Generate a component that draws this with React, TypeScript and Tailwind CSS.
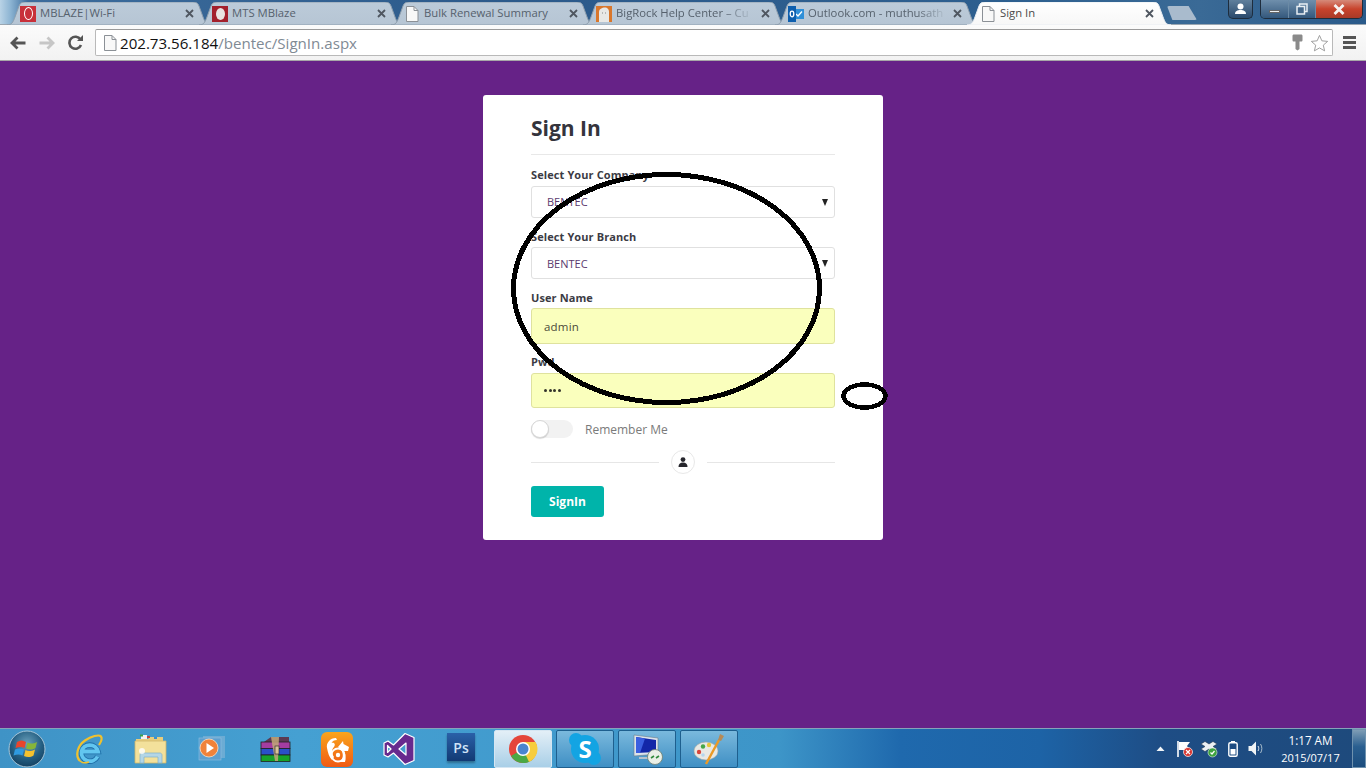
import React from "react";

const UI = "font-['Open_Sans',sans-serif]";

function TabShape({ active }: { active?: boolean }) {
  const id = active ? "tabA" : "tabI";
  return (
    <svg className="absolute inset-0" width="204" height="23" viewBox="0 0 204 23" fill="none">
      <defs>
        <linearGradient id={id} x1="0" y1="0" x2="0" y2="1">
          <stop offset="0" stopColor={active ? "#ffffff" : "#bccbd9"} />
          <stop offset="1" stopColor={active ? "#f7f7f7" : "#b6c5d4"} />
        </linearGradient>
      </defs>
      <path
        d="M0 23 C5 23 6 20 8 15 L12 4 C13 1 15 0 18 0 L186 0 C189 0 191 1 192 4 L196 15 C198 20 199 23 204 23 Z"
        fill={`url(#${id})`}
        stroke={active ? "#e8edf2" : "#8f9fae"}
        strokeWidth="1"
      />
    </svg>
  );
}

function Page() {
  return (
    <svg width="16" height="18" viewBox="0 0 16 18" fill="none">
      <path d="M2.500 1.500H10L14 5.500V16.500H2.500Z" fill="#f8f8f8" stroke="#8b9096" />
      <path d="M10 1.500V5.500H14" stroke="#8b9096" />
    </svg>
  );
}

function Tab({
  title,
  icon,
  active,
  fade,
}: {
  title: string;
  icon: React.ReactNode;
  active?: boolean;
  fade?: boolean;
}) {
  return (
    <div className={`relative w-[204px] h-[23px] shrink-0 -mr-[12px] ${active ? "z-10" : ""}`}>
      <TabShape active={active} />
      <div className="absolute inset-0 flex items-center pl-[13px]">
        <div className="w-[16px] h-[17px] flex items-center justify-center shrink-0">{icon}</div>
        <div
          className={`ml-[4px] -mt-[1px] whitespace-nowrap text-[11.300px] leading-[16px] ${UI} ${active ? "text-[#4a4a4a]" : "text-[#56616d]"}`}
          style={
            fade
              ? { WebkitMaskImage: "linear-gradient(to right,#000 80%,rgba(0,0,0,0.15))" }
              : undefined
          }
        >
          {title}
        </div>
      </div>
      <svg className="absolute left-[178px] top-[7px]" width="9" height="9" viewBox="0 0 9 9">
        <path d="M1 1L8 8M8 1L1 8" stroke="#4f5660" strokeWidth="1.800" />
      </svg>
    </div>
  );
}

function TabBar() {
  return (
    <div className="relative h-[25px] bg-[linear-gradient(90deg,#b9d3e6_0px,#8fb6d4_10px,#3c6c9c_28px,#2c5a8b_500px,#2d5f8f_1000px,#3a6a96_1200px,#2a5a8a_1366px)] border-b border-[#9aa6b1]">
      <div className="flex pt-[2px] pl-[7px]">
        <Tab
          title="MBLAZE|Wi-Fi"
          icon={
            <div className="w-[16px] h-[16px] bg-[#c8303a] flex items-center justify-center">
              <div className="w-[9px] h-[13px] rounded-[50%] border-[1.500px] border-white" />
            </div>
          }
        />
        <Tab
          title="MTS MBlaze"
          icon={
            <div className="w-[16px] h-[16px] bg-[#a3202c] flex items-center justify-center">
              <div className="w-[9px] h-[12px] rounded-[50%] bg-[#e9e4e2]" />
            </div>
          }
        />
        <Tab title="Bulk Renewal Summary" icon={<Page />} />
        <Tab
          title="BigRock Help Center – Cu"
          fade
          icon={
            <svg width="16" height="16" viewBox="0 0 16 16">
              <rect width="16" height="16" fill="#d9772c" />
              <path d="M3 16V6C3 3 6 1.500 9 1.500C12 1.500 13 4 13 6V16Z" fill="#e8e8e6" />
              <path d="M6 7h1M9 7h1" stroke="#888" />
            </svg>
          }
        />
        <Tab
          title="Outlook.com - muthusath"
          fade
          icon={
            <svg width="16" height="16" viewBox="0 0 16 16">
              <rect x="6" y="3" width="10" height="10" fill="#2f8fd8" />
              <path d="M8 8L10 10L14 5.500" stroke="#fff" strokeWidth="1.300" fill="none" />
              <rect y="0" width="8" height="16" fill="#0e5fae" />
              <ellipse cx="4" cy="8" rx="1.800" ry="2.800" fill="none" stroke="#fff" strokeWidth="1.300" />
            </svg>
          }
        />
        <Tab title="Sign In" active icon={<Page />} />
        <div className="ml-[8px] mt-[4px] w-[30px] h-[14px] bg-[#a9bbcd] [clip-path:polygon(0_0,72%_0,100%_100%,18%_100%)] rounded-[2px]" />
      </div>

      <div className="absolute top-0 right-[3px] flex">
        <div className="w-[25px] h-[19px] mr-[7px] rounded-b-[5px] border border-t-0 border-[#1e2d3d] bg-[linear-gradient(#5f7f9c,#2a4a6c)] flex items-center justify-center">
          <svg width="13" height="12" viewBox="0 0 13 12">
            <circle cx="6.500" cy="3.500" r="3" fill="#fff" />
            <path d="M1 11C1 8 3.500 7 6.500 7C9.500 7 12 8 12 11Z" fill="#fff" />
          </svg>
        </div>
        <div className="flex h-[19px] rounded-b-[5px] border border-t-0 border-[#1e2d3d] overflow-hidden">
          <div className="w-[28px] border-r border-[#6b8aa5] bg-[linear-gradient(#6f8fac,#34587c)] flex items-center justify-center">
            <div className="w-[11px] h-[3px] mt-[4px] bg-[#eef2f5] border-[0.5px] border-[#666]" />
          </div>
          <div className="w-[27px] border-r border-[#6b8aa5] bg-[linear-gradient(#6f8fac,#34587c)] flex items-center justify-center">
            <svg width="12" height="12" viewBox="0 0 12 12" fill="none">
              <rect x="3.500" y="1" width="7.500" height="7.500" stroke="#e8eef3" strokeWidth="1.500" />
              <rect x="1" y="3.500" width="7.500" height="7.500" fill="#47698b" stroke="#e8eef3" strokeWidth="1.500" />
            </svg>
          </div>
          <div className="w-[46px] bg-[linear-gradient(#d58a7a,#c8432c_50%,#a93a28)] flex items-center justify-center">
            <svg width="12" height="11" viewBox="0 0 12 11">
              <path d="M1.500 1L10.500 10M10.500 1L1.500 10" stroke="#f5f2f0" strokeWidth="2.800" />
            </svg>
          </div>
        </div>
      </div>
    </div>
  );
}

function Toolbar() {
  return (
    <div className="h-[36px] bg-[linear-gradient(#fbfbfb,#f2f2f2)] border-b border-[#a8a8a8] flex items-center pl-[10px]">
      <svg width="16" height="14" viewBox="0 0 16 14" fill="none">
        <path d="M7.500 1.500L2 7L7.500 12.500M2.500 7H15.500" stroke="#555" strokeWidth="2.800" />
      </svg>
      <svg className="ml-[13px]" width="16" height="14" viewBox="0 0 16 14" fill="none">
        <path d="M8.500 1.500L14 7L8.500 12.500M13.500 7H0.500" stroke="#c6c6c6" strokeWidth="2.800" />
      </svg>
      <svg className="ml-[13px]" width="16" height="16" viewBox="0 0 16 16" fill="none">
        <path d="M13 10A6 6 0 1 1 12.500 4.500" stroke="#555" strokeWidth="2.600" />
        <path d="M9 6H15V0Z" fill="#555" />
      </svg>
      <div className="ml-[11px] w-[1238px] h-[27px] bg-white rounded-[2px] border border-[#b9b9b9] border-t-[#9a9a9a] flex items-center pl-[6px]">
        <Page />
        <div className={`ml-[2px] text-[15.100px] leading-[20px] whitespace-nowrap ${UI}`}>
          <span className="text-[#111]">202.73.56.184</span>
          <span className="text-[#7f8a94]">/bentec/SignIn.aspx</span>
        </div>
        <div className="ml-auto mr-[3px] flex items-center gap-[7px]">
          <svg width="11" height="17" viewBox="0 0 11 17">
            <path d="M2 0.500H9C10 0.500 10.500 1 10.500 2V6C10.500 7 10 7.500 9 7.500H7.500V15L5.500 16.500L3.500 15V7.500H2C1 7.500 0.500 7 0.500 6V2C0.500 1 1 0.500 2 0.500Z" fill="#8a8a8a" />
          </svg>
          <svg width="19" height="18" viewBox="0 0 20 19" fill="#fff" stroke="#9a9a9a">
            <path d="M10 1.500L12.500 7.200L18.600 7.800L14 11.800L15.400 17.800L10 14.700L4.600 17.800L6 11.800L1.400 7.800L7.500 7.200Z" />
          </svg>
        </div>
      </div>
      <div className="ml-[10px] flex flex-col gap-[2px]">
        <div className="w-[13px] h-[3px] bg-[#555]" />
        <div className="w-[13px] h-[3px] bg-[#555]" />
        <div className="w-[13px] h-[3px] bg-[#555]" />
      </div>
    </div>
  );
}

function Label({ children, className = "" }: { children: React.ReactNode; className?: string }) {
  return (
    <div className={`text-[11px] leading-[14px] font-bold tracking-[0.1px] text-[#3b3b44] ${className}`}>
      {children}
    </div>
  );
}

function SelectBox({ mt, pt }: { mt: string; pt: string }) {
  return (
    <div className={`relative h-[32px] ${mt} bg-white rounded-[3px] border border-[#e0e0e0] flex items-center pl-[15px]`}>
      <span className={`text-[11px] text-[#5b3a6e] ${pt}`}>BENTEC</span>
      <div className="absolute right-[6px] top-[12px] w-0 h-0 border-l-[3.500px] border-r-[3.500px] border-t-[7px] border-l-transparent border-r-transparent border-t-[#222]" />
    </div>
  );
}

function Card() {
  return (
    <div className={`w-[400px] h-[445px] mt-[34px] bg-white rounded-[3px] px-[48px] ${UI}`}>
      <div className="pt-[18px] h-[60px] border-b border-[#e8e8e8] text-[21px] leading-[30px] font-bold text-[#34343c]">
        Sign In
      </div>
      <Label className="mt-[13px]">Select Your Company</Label>
      <SelectBox mt="mt-[4px]" pt="pt-[1px]" />
      <Label className="mt-[12px]">Select Your Branch</Label>
      <SelectBox mt="mt-[3px]" pt="pt-[3px]" />
      <Label className="mt-[12px]">User Name</Label>
      <div className="mt-[3px] h-[36px] pt-[1px] bg-[#faffbd] rounded-[3px] border border-[#dfe29e] flex items-center pl-[12px] text-[11.500px] text-[#4a4a3a] tracking-[0.2px]">
        admin
      </div>
      <Label className="mt-[11px]">Pwd</Label>
      <div className="mt-[4px] h-[35px] bg-[#faffbd] rounded-[3px] border border-[#dfe29e] flex items-center pl-[12px]">
        <div className="flex gap-[1.500px] mt-[-1px]">
          {[0, 1, 2, 3].map((i) => (
            <div key={i} className="w-[3px] h-[3px] rounded-full bg-[#33332a]" />
          ))}
        </div>
      </div>
      <div className="mt-[12px] h-[18px] flex items-center">
        <div className="relative w-[42px] h-[18px] rounded-full bg-[#f2f2f2]">
          <div className="absolute left-0 top-0 w-[18px] h-[18px] rounded-full bg-white border border-[#d6d6d6] shadow-[0_1px_1px_rgba(0,0,0,0.15)]" />
        </div>
        <span className="ml-[12px] pt-[2px] text-[12px] text-[#7a7a7a]">Remember Me</span>
      </div>
      <div className="mt-[12px] h-[24px] flex items-center">
        <div className="w-[128px] h-px bg-[#e6e6e6]" />
        <div className="mx-[12px] w-[24px] h-[24px] rounded-full border border-[#e8e8e8] flex items-center justify-center">
          <svg width="10" height="10" viewBox="0 0 10 10" fill="#26262c">
            <circle cx="5" cy="2.600" r="2.400" />
            <path d="M0.500 10C0.500 7 2 5.500 5 5.500C8 5.500 9.500 7 9.500 10Z" />
          </svg>
        </div>
        <div className="w-[128px] h-px bg-[#e6e6e6]" />
      </div>
      <div className="mt-[12px] w-[73px] h-[31px] rounded-[3px] bg-[#00b4aa] flex items-center justify-center text-white text-[12px] font-bold">
        SignIn
      </div>
    </div>
  );
}

function TaskButton({ children, active }: { children: React.ReactNode; active?: boolean }) {
  return (
    <div className={`w-[58px] h-[38px] flex items-center justify-center shrink-0 rounded-[2px] border ${active ? "border-[#d5e6f2] bg-[linear-gradient(#e3eff7,#a9cfe7)]" : "border-[#1e5f8e] bg-[linear-gradient(#7ab9dd,#3f8fc4)]"}`}>
      {children}
    </div>
  );
}

function TaskIcon({ children }: { children: React.ReactNode }) {
  return <div className="w-[58px] h-[38px] flex items-center justify-center shrink-0">{children}</div>;
}

function Taskbar() {
  return (
    <div className="relative h-[40px] border-t border-[#86a3b8] bg-[linear-gradient(90deg,#3f93c6_0px,#45a0d2_300px,#3d95c8_780px,#1f69ad_900px,#1d63a6_1040px,#1e4d85_1160px,#1e4a7c_1366px)] flex items-center">
      <div className="w-[56px] shrink-0 flex justify-center pr-[2px]">
        <svg width="38" height="38" viewBox="0 0 38 38">
          <defs>
            <radialGradient id="orb" cx="0.500" cy="0.350" r="0.700">
              <stop offset="0" stopColor="#6aa0bc" />
              <stop offset="0.600" stopColor="#235d80" />
              <stop offset="1" stopColor="#123c5c" />
            </radialGradient>
          </defs>
          <circle cx="19" cy="19" r="18" fill="url(#orb)" stroke="#a7c6d8" />
          <path d="M9 12C12 10 15 10 18 12L16.500 18C14 16.500 11 16.500 7.500 18Z" fill="#e8452c" />
          <path d="M19.500 12.500C22 14 25 14 29 12L27.500 18C24.500 20 21 20 18 18.500Z" fill="#86b63a" />
          <path d="M7 19.500C10 18 13 18 16 19.500L14.500 25.500C12 24 9 24 5.500 25.500Z" fill="#2f9ae0" />
          <path d="M17.500 20C20 21.500 23 21.500 27 19.500L25.500 25.500C22.500 27.500 19 27.500 16 26Z" fill="#f6c22d" />
        </svg>
      </div>
      <div className="flex gap-[4px] pl-[4px]">
        <TaskIcon>
          <svg width="32" height="32" viewBox="0 0 32 32" fill="none">
            <path d="M10 18.500H25A8.500 8.500 0 0 0 8.500 18.500A8.500 8.500 0 0 0 24.500 23.500" stroke="#1f6fa8" strokeWidth="5.500" />
            <path d="M10 18.500H25A8.500 8.500 0 0 0 8.500 18.500A8.500 8.500 0 0 0 24.500 23.500" stroke="#62c6ef" strokeWidth="3.800" />
            <path d="M7 28C2 23 4 13 12 7.500C18 3.500 26 1 28 3.500C29.500 5.500 28 9 26 12" stroke="#f0c12e" strokeWidth="2.200" />
            <path d="M7 28C9 30 13 30 16 29" stroke="#f0c12e" strokeWidth="1.500" />
          </svg>
        </TaskIcon>
        <TaskIcon>
          <svg width="34" height="30" viewBox="0 0 34 30">
            <path d="M2 5H14L16 3H29V9H2Z" fill="#e8cd7c" />
            <rect x="7" y="1" width="6" height="4" fill="#f2f2f2" />
            <rect x="6" y="0.500" width="3" height="2" fill="#3da04a" />
            <rect x="13" y="2" width="3" height="2" fill="#c8403a" />
            <rect x="20" y="3" width="3" height="2" fill="#3a90d0" />
            <path d="M1 7H32V29H1Z" fill="#f3e19b" stroke="#cfb66a" strokeWidth="0.800" />
            <path d="M6 29V21C6 20 7 19 8 19H26C27 19 28 20 28 21V29H24V23H10V29Z" fill="#b4d6e6" stroke="#7fb2cc" strokeWidth="0.700" />
            <circle cx="8" cy="17" r="3" fill="#ffffff" opacity="0.800" />
          </svg>
        </TaskIcon>
        <TaskIcon>
          <svg width="30" height="28" viewBox="0 0 30 28">
            <rect x="5" y="1" width="22" height="22" fill="#7eb2d6" opacity="0.700" />
            <rect x="1" y="3" width="22" height="22" fill="#5d9fcf" stroke="#8fc0e0" strokeWidth="0.600" />
            <circle cx="11" cy="13" r="9" fill="#f0823a" stroke="#ffe0c0" strokeWidth="0.800" />
            <path d="M8.500 8L16 13L8.500 18Z" fill="#fff" />
          </svg>
        </TaskIcon>
        <TaskIcon>
          <svg width="32" height="26" viewBox="0 0 32 26">
            <path d="M2 8L12 1H30V8H2Z" fill="#5b3a52" />
            <rect x="2" y="6" width="29" height="6.500" fill="#a43da0" stroke="#222" strokeWidth="0.800" />
            <rect x="2" y="12.500" width="29" height="6.500" fill="#2a4fc8" stroke="#222" strokeWidth="0.800" />
            <rect x="2" y="19" width="29" height="6.500" fill="#17a32a" stroke="#222" strokeWidth="0.800" />
            <path d="M12 1L20 1L19 25L16 25Z" fill="#c3a878" opacity="0.850" />
            <rect x="16" y="10" width="4" height="8" fill="#d8c498" stroke="#222" strokeWidth="0.600" />
          </svg>
        </TaskIcon>
        <TaskIcon>
          <div className="w-[32px] h-[35px] mt-[2px] rounded-[6px] bg-[linear-gradient(#f9a51c,#f05a14)] flex items-center justify-center">
            <svg width="30" height="30" viewBox="0 0 30 30" fill="#fff">
              <path d="M14 3C8 3 4 8 5 13C6 18 7 22 10 25L12 22C9 17 10 14 12 12C14 9 12 7 9.500 8C10.500 6 12 5 15 5Z" />
              <circle cx="16" cy="20" r="6.500" fill="none" stroke="#fff" strokeWidth="1.800" />
              <circle cx="16" cy="20" r="2.200" />
              <path d="M16 12L21 6L21.500 9L27 12L26 16L22 16C24 20 24 24 23 27H18C21 24 22 19 19 15Z" />
            </svg>
          </div>
        </TaskIcon>
        <TaskIcon>
          <svg width="34" height="34" viewBox="0 0 34 34">
            <path
              fillRule="evenodd"
              d="M23 1.500L32 5.500V28.500L23 32.500L11.500 21L6 25L2 23V11L6 9L11.500 13ZM5.500 13.500V20.500L9 17ZM24 11L17 17L24 23Z"
              fill="#672a8e"
              stroke="#fff"
              strokeWidth="1.200"
              strokeLinejoin="round"
            />
          </svg>
        </TaskIcon>
        <TaskIcon>
          <div className="w-[28px] h-[28px] mb-[3px] bg-[linear-gradient(#2a61a8,#123a74)] flex items-center justify-center text-[14px] font-semibold text-[#cfe3f7] font-['Open_Sans',sans-serif] shadow-[0_2px_2px_rgba(0,0,0,0.3)]">
            Ps
          </div>
        </TaskIcon>
        <TaskButton active>
          <svg width="30" height="30" viewBox="0 0 30 30">
            <circle cx="15" cy="15" r="14" fill="#e4453a" />
            <path d="M15 15L3 22A14 14 0 0 0 15 29C20 29 24 27 26 23Z" fill="#4aa845" />
            <path d="M15 8H27.500A14 14 0 0 1 21 28L15 15Z" fill="#f7cd3d" />
            <circle cx="15" cy="15" r="7" fill="#fff" />
            <circle cx="15" cy="15" r="5.500" fill="#4a85cf" />
          </svg>
        </TaskButton>
        <TaskButton>
          <div className="relative w-[32px] h-[32px] flex items-center justify-center">
            <div className="absolute left-0 top-0 w-[14px] h-[14px] rounded-full bg-[#13a4e3]" />
            <div className="absolute right-0 bottom-0 w-[14px] h-[14px] rounded-full bg-[#13a4e3]" />
            <div className="absolute inset-[2px] rounded-full bg-[#13a4e3]" />
            <span className="relative text-white text-[24px] leading-none font-bold font-['Open_Sans',sans-serif]">S</span>
          </div>
        </TaskButton>
        <TaskButton>
          <svg width="32" height="32" viewBox="0 0 32 32">
            <path d="M3 2L27 5V21L3 23Z" fill="#dbe3ea" stroke="#6c7c8a" strokeWidth="0.600" />
            <path d="M5 4L25 7V19L5 20Z" fill="#1326a8" />
            <path d="M5 4L14 5.500L9 20H5Z" fill="#3b5fe0" />
            <path d="M8 24H20L24 26H8Z" fill="#b6c2cc" />
            <circle cx="24" cy="24" r="7.500" fill="#e9efe6" stroke="#6e7f70" strokeWidth="0.800" />
            <path d="M20 25L23 23M25 25L28 23" stroke="#2f8a3c" strokeWidth="1.600" />
          </svg>
        </TaskButton>
        <TaskButton>
          <svg width="32" height="32" viewBox="0 0 32 32">
            <ellipse cx="13" cy="18" rx="12" ry="9" fill="#e9e9e4" stroke="#a7a79f" strokeWidth="0.600" />
            <circle cx="6" cy="19" r="2.200" fill="#d9453c" />
            <circle cx="10" cy="13.500" r="2.200" fill="#46a648" />
            <circle cx="16" cy="12" r="2.200" fill="#e8c53a" />
            <circle cx="10" cy="22" r="1.800" fill="#b5d6ee" />
            <path d="M13 31L26 7" stroke="#ec9a25" strokeWidth="2.400" />
            <path d="M25 7L27 1L31 3L28 8Z" fill="#b78a55" />
          </svg>
        </TaskButton>
      </div>
      <div className="ml-auto flex items-center h-full">
        <svg width="9" height="5" viewBox="0 0 9 5" className="mr-[11px]">
          <path d="M0.500 5L4.500 0.500L8.500 5Z" fill="#f1f5f8" />
        </svg>
        <svg width="18" height="18" viewBox="0 0 18 18" className="mr-[6px]">
          <path d="M2 1V17" stroke="#fff" strokeWidth="1.600" />
          <path d="M3 2H14L11 6L14 10H3Z" fill="#fff" />
          <circle cx="12" cy="12" r="4.500" fill="#d9342e" stroke="#fff" strokeWidth="0.700" />
          <path d="M10 10L14 14M14 10L10 14" stroke="#fff" strokeWidth="1.200" />
        </svg>
        <svg width="18" height="18" viewBox="0 0 18 18" className="mr-[10px]">
          <path d="M1 4L5 1.500L9 4L13 1.500L17 4L13 6.500L17 9L13 11.500L9 9L5 11.500L1 9L5 6.500Z" fill="#ecf0f3" stroke="#203040" strokeWidth="0.500" />
          <circle cx="12.500" cy="12.500" r="4.500" fill="#3ea33f" stroke="#fff" strokeWidth="0.500" />
          <path d="M10.500 12.500L12 14L14.500 11" stroke="#fff" strokeWidth="1.200" fill="none" />
        </svg>
        <svg width="10" height="16" viewBox="0 0 10 16" className="mr-[10px]">
          <rect x="3" y="0" width="4" height="2" fill="#fff" />
          <rect x="0.800" y="1.800" width="8.400" height="13.400" rx="1.500" fill="none" stroke="#fff" strokeWidth="1.400" />
          <rect x="2.500" y="8" width="5" height="5.500" fill="#fff" />
        </svg>
        <svg width="16" height="15" viewBox="0 0 16 15" fill="none">
          <path d="M0.500 5H3.500L8 0.500V14.500L3.500 10H0.500Z" fill="#f0f3f5" />
          <path d="M10 5C11 6.500 11 8.500 10 10" stroke="#dfe6ec" />
          <path d="M12.500 3C14.300 5.500 14.300 9.500 12.500 12" stroke="#a9bdcc" />
        </svg>
        <div className="w-[83px] ml-[5px] text-center text-white leading-[17px] font-['Open_Sans',sans-serif]">
          <div className="text-[11.700px]">1:17 AM</div>
          <div className="text-[11px]">2015/07/17</div>
        </div>
        <div className="w-[14px] h-full border border-[#6f92ae] bg-[linear-gradient(#7f9db5,#2a5f90_45%,#1c4d7e)]" />
      </div>
    </div>
  );
}

export default function App() {
  return (
    <div className="relative w-[1366px] h-[768px] overflow-hidden flex flex-col">
      <TabBar />
      <Toolbar />
      <div className="flex-1 min-h-0 bg-[#662287] flex justify-center items-start">
        <Card />
      </div>
      <Taskbar />
      <svg className="absolute left-0 top-0 pointer-events-none" width="1366" height="768" shapeRendering="crispEdges" fill="none" stroke="#000">
        <ellipse cx="666.500" cy="288.500" rx="153" ry="114" strokeWidth="5" />
        <ellipse cx="864.500" cy="396" rx="21" ry="11.500" strokeWidth="4.500" />
      </svg>
    </div>
  );
}
